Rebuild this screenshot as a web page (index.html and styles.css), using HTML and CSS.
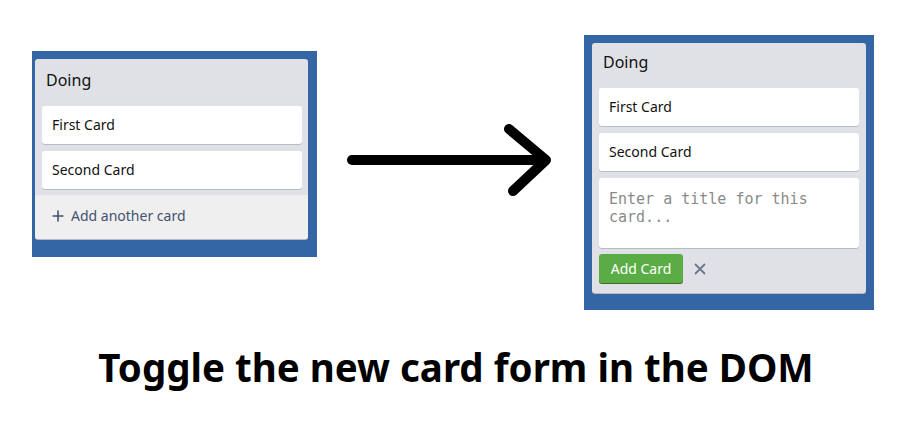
FILE: index.html
```html
<!DOCTYPE html>
<html lang="en">
<head>
<meta charset="utf-8">
<title>Toggle the new card form</title>
<link rel="stylesheet" href="styles.css">
</head>
<body>
<div class="page">
  <div class="stage">
    <div class="board board-left">
      <div class="list">
        <div class="list-header">Doing</div>
        <div class="cards">
          <div class="card">First Card</div>
          <div class="card">Second Card</div>
        </div>
        <div class="add-row">
          <svg class="plus" width="12" height="12" viewBox="0 0 12 12"><path d="M6 0.5V11.5M0.5 6H11.5" stroke="#42526e" stroke-width="1.6" fill="none"/></svg>
          <span>Add another card</span>
        </div>
      </div>
    </div>

    <svg class="arrow" width="220" height="80" viewBox="340 120 220 80">
      <path d="M352 160H545M509 129L546 160L513 191" stroke="#000" stroke-width="10" stroke-linecap="round" stroke-linejoin="round" fill="none"/>
    </svg>

    <div class="board board-right">
      <div class="list list-open">
        <div class="list-header">Doing</div>
        <div class="cards">
          <div class="card">First Card</div>
          <div class="card">Second Card</div>
          <div class="composer">
            <div class="textarea"><span class="placeholder">Enter a title for this card...</span></div>
            <div class="controls">
              <button class="btn-add">Add Card</button>
              <svg class="close" width="14" height="14" viewBox="0 0 14 14"><path d="M2 2L12 12M12 2L2 12" stroke="#6b778c" stroke-width="1.8" fill="none"/></svg>
            </div>
          </div>
        </div>
      </div>
    </div>
  </div>
  <h1 class="title">Toggle the new card form in the DOM</h1>
</div>
</body>
</html>
```

FILE: styles.css
```css
* { box-sizing: border-box; }
html, body { margin: 0; padding: 0; background: #fff; }
body { width: 900px; height: 427px; overflow: hidden; font-family: "Noto Sans", "Open Sans", sans-serif; color: #172b4d; }

.page { display: flex; flex-direction: column; }

.stage { display: flex; align-items: flex-start; padding-left: 32px; height: 330px; }

.board { background: #3465a4; }
.board-left { width: 285px; height: 206px; margin-top: 51px; padding: 8px 9px 18px 3px; }
.board-right { width: 290px; height: 275px; margin-top: 35px; margin-left: 24px; padding: 8px 8px 17px 8px; }

.arrow { margin-top: 120px; margin-left: 23px; flex: none; }

.list { background: #dfe1e6; border-radius: 3px; width: 273px; display: flex; flex-direction: column; overflow: hidden; box-shadow: 0 1px 0 #b5b9c2; }
.list-open { width: 274px; height: 250px; }

.list-header { font-size: 16px; line-height: 20px; padding: 11px 11px 16px; color: #111; }
.list-open .list-header { padding: 9px 11px 16px; }

.cards { display: flex; flex-direction: column; gap: 6px; padding: 0 6px 5px 7px; }

.card { background: #fff; border-radius: 3px; height: 38px; margin-bottom: 1px; padding: 10px 10px; font-size: 14px; line-height: 18px; color: #111; box-shadow: 0 1px 0 #b6bcc6; width: 260px; }

.add-row { background: #efefef; height: 44px; display: flex; align-items: center; gap: 7px; padding-left: 17px; padding-bottom: 3px; font-size: 14px; color: #42526e; }
.plus { flex: none; }

.composer { display: flex; flex-direction: column; gap: 6px; }
.textarea { background: #fff; border-radius: 3px; height: 70px; width: 260px; padding: 12px 10px; box-shadow: 0 1px 0 #b6bcc6; }
.placeholder { font-family: "DejaVu Sans Mono", monospace; font-size: 15px; line-height: 18px; color: #8a8a8a; display: block; }

.controls { display: flex; align-items: center; gap: 10px; }
.btn-add { background: #5aac44; color: #fff; border: 0; border-radius: 3px; height: 29px; width: 84px; padding: 0; font-family: "Noto Sans", sans-serif; font-size: 14px; box-shadow: 0 1px 0 #3f6f21; }
.close { flex: none; }

.title { margin: 15px 0 0; padding-left: 12px; text-align: center; font-family: "Noto Sans", sans-serif; font-weight: 700; font-size: 38.5px; line-height: 44px; color: #000; }
```
